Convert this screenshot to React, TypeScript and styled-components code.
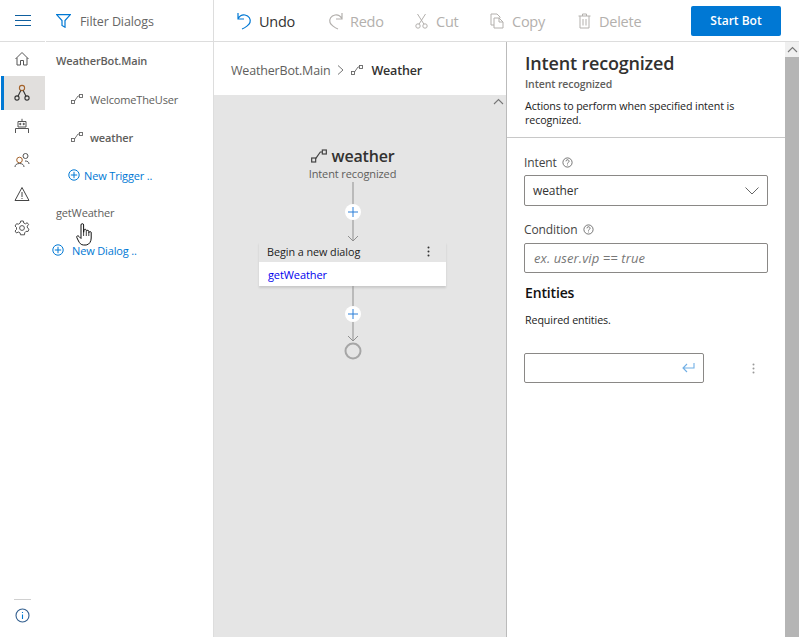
import React from 'react'
import styled, { createGlobalStyle } from 'styled-components'

const GlobalStyle = createGlobalStyle`
  html, body { margin: 0; padding: 0; background: #fff; }
  body { font-family: "Open Sans", "Noto Sans", "Liberation Sans", sans-serif; color: #333; overflow: hidden; }
  * { box-sizing: border-box; }
`

const Page = styled.div`
  width: 799px;
  height: 637px;
  display: flex;
  flex-direction: column;
  position: relative;
`

const Header = styled.header`
  display: flex;
  height: 42px;
  flex: none;
`

const MenuCell = styled.div`
  width: 45px;
  display: flex;
  align-items: center;
  justify-content: center;
  border-bottom: 1px solid #ddd;
  margin-right: 1px;
`

const FilterCell = styled.div`
  width: 168px;
  display: flex;
  align-items: center;
  gap: 9px;
  padding: 1px 0 0 10px;
  font-size: 12.5px;
  letter-spacing: -0.1px;
  color: #666;
  border-bottom: 1px solid #ddd;
  border-right: 1px solid #ddd;
`

const Toolbar = styled.div`
  flex: 1;
  display: flex;
  align-items: center;
  padding: 1px 18px 0 23px;
  border-bottom: 1px solid #ddd;
`

const ToolButton = styled.div<{ $off?: boolean; $w: number; $gap: number }>`
  width: ${p => p.$w}px;
  display: flex;
  align-items: center;
  gap: ${p => p.$gap}px;
  font-size: 14.5px;
  letter-spacing: -0.25px;
  color: ${p => (p.$off ? '#b3b0ad' : '#333')};
`

const StartButton = styled.button`
  margin: -1px 0 0 auto;
  width: 90px;
  height: 30px;
  border: 0;
  border-radius: 2px;
  padding-top: 1px;
  background: #0078d4;
  color: #fff;
  font: 600 12px "Open Sans", sans-serif;
`

const Body = styled.div`
  flex: 1;
  display: flex;
  min-height: 0;
`

const Rail = styled.nav`
  width: 45px;
  flex: none;
  display: flex;
  flex-direction: column;
`

const RailItem = styled.div<{ $active?: boolean }>`
  height: 33.8px;
  margin-left: 1px;
  display: flex;
  align-items: center;
  justify-content: center;
  padding-right: 6px;
  background: ${p => (p.$active ? '#e1dfdd' : 'transparent')};
  border-left: 3px solid ${p => (p.$active ? '#0078d4' : 'transparent')};
`

const RailFoot = styled.div`
  margin-top: auto;
  margin-bottom: 14px;
  display: flex;
  flex-direction: column;
  align-items: center;
  gap: 8px;
  padding-right: 1px;
`

const RailRule = styled.div`
  width: 17px;
  height: 1px;
  background: #d0d0d0;
`

const Sidebar = styled.aside`
  width: 168px;
  flex: none;
  border-right: 1px solid #ddd;
  margin-left: 1px;
  font-size: 11px;
  letter-spacing: -0.15px;
  color: #605e5c;
`

const TreeRow = styled.div<{ $indent: number; $gap?: number; $weight?: number; $link?: boolean; $lift?: boolean }>`
  height: 38px;
  display: flex;
  align-items: center;
  padding-left: ${p => p.$indent}px;
  padding-bottom: ${p => (p.$lift ? 2 : 0)}px;
  gap: ${p => p.$gap ?? 7}px;
  font-weight: ${p => p.$weight ?? 400};
  color: ${p => (p.$link ? '#0078d4' : '#605e5c')};
`

const Center = styled.main`
  width: 292px;
  flex: none;
  display: flex;
  flex-direction: column;
`

const Crumbs = styled.div`
  height: 53px;
  display: flex;
  align-items: center;
  padding: 3px 0 0 17px;
  font-size: 12.5px;
  letter-spacing: -0.18px;
  color: #605e5c;
`

const CrumbCurrent = styled.strong`
  font-weight: 600;
  color: #323130;
  margin-left: 8px;
`

const Canvas = styled.div`
  flex: 1;
  background: #e5e5e5;
  position: relative;
  padding: 51px 15px 0 0;
  display: flex;
  flex-direction: column;
  align-items: center;
`

const ScrollUp = styled.div`
  position: absolute;
  top: 3px;
  right: 2px;
  line-height: 0;
`

const FlowTitle = styled.div`
  height: 20px;
  display: flex;
  align-items: center;
  gap: 5px;
  font-size: 16px;
  font-weight: 600;
  letter-spacing: -0.2px;
  color: #323130;
`

const FlowSub = styled.div`
  font-size: 11px;
  line-height: 16px;
  letter-spacing: -0.12px;
  color: #605e5c;
`

const Connector = styled.div<{ $h: number }>`
  height: ${p => p.$h}px;
  flex: none;
  line-height: 0;
`

const Node = styled.div`
  width: 187px;
  flex: none;
  background: #fff;
  box-shadow: 0 2px 2px rgba(0, 0, 0, 0.12);
`

const NodeHead = styled.div`
  height: 20px;
  background: #e5e5e5;
  display: flex;
  align-items: center;
  justify-content: space-between;
  padding: 0 16px 1px 8px;
  font-size: 10.8px;
  letter-spacing: -0.05px;
  color: #222;
`

const NodeBody = styled.div`
  height: 24px;
  display: flex;
  align-items: center;
  padding: 1px 0 0 9px;
  font-size: 11px;
  letter-spacing: -0.1px;
  color: #0000ee;
`

const Panel = styled.section`
  flex: 1;
  display: flex;
  border-left: 1px solid #bbb;
`

const PanelMain = styled.div`
  flex: 1;
  display: flex;
  flex-direction: column;
`

const PanelHead = styled.div`
  height: 96px;
  padding: 8px 10px 0 18px;
  border-bottom: 1px solid #c8c8c8;
`

const PanelTitle = styled.h1`
  margin: 0;
  font-size: 18px;
  line-height: 26px;
  font-weight: 600;
  letter-spacing: -0.18px;
  color: #323130;
`

const PanelSub = styled.div`
  font-size: 10.5px;
  line-height: 14px;
  margin-top: 1px;
  font-weight: 600;
  color: #605e5c;
  letter-spacing: -0.1px;
  margin-bottom: 8px;
`

const PanelDesc = styled.div`
  font-size: 10.7px;
  line-height: 14px;
  letter-spacing: -0.1px;
  color: #222;
`

const PanelForm = styled.div`
  padding: 14px 17px 0 17px;
  display: flex;
  flex-direction: column;
`

const FieldLabel = styled.label<{ $mb: number }>`
  height: 20px;
  display: flex;
  align-items: center;
  gap: 5px;
  font-size: 12px;
  letter-spacing: -0.1px;
  color: #444;
  margin-bottom: ${p => p.$mb}px;
`

const Field = styled.div<{ $w?: number; $h?: number; $mb: number }>`
  width: ${p => (p.$w ? `${p.$w}px` : '100%')};
  height: ${p => p.$h ?? 30}px;
  flex: none;
  border: 1px solid #8a8886;
  border-radius: 2px;
  display: flex;
  align-items: center;
  justify-content: space-between;
  padding: 0 8px;
  font-size: 12px;
  letter-spacing: -0.1px;
  color: #333;
  margin-bottom: ${p => p.$mb}px;
`

const Placeholder = styled.span`
  font-size: 13px;
  font-style: italic;
  letter-spacing: 0.1px;
  color: #777;
  padding-left: 1px;
`

const SectionTitle = styled.div`
  font-size: 14px;
  line-height: 20px;
  font-weight: 600;
  letter-spacing: -0.15px;
  color: #111;
  padding-left: 1px;
`

const Hint = styled.div`
  font-size: 10.7px;
  line-height: 14px;
  letter-spacing: -0.1px;
  color: #222;
  margin: 10px 0 26px;
  padding-left: 1px;
`

const EntityRow = styled.div`
  display: flex;
  align-items: flex-start;
  justify-content: space-between;
  padding-right: 13px;
`

const Kebab = styled.div`
  height: 30px;
  display: flex;
  align-items: center;
`

const ScrollTrack = styled.div`
  width: 14px;
  flex: none;
  display: flex;
  flex-direction: column;
  background: #b5b5b5;
`

const ScrollCap = styled.div`
  height: 15px;
  background: #f0f0f0;
  display: flex;
  align-items: center;
  justify-content: center;
`

const EndCircle = styled.svg`
  display: block;
  flex: none;
`

const Cursor = styled.svg`
  position: absolute;
  left: 76px;
  top: 223px;
`

const Icon = styled.svg`
  display: block;
  flex: none;
  fill: none;
`

const CrumbArrow = styled(Icon)`
  margin: 0 7px;
`

type SvgProps = { size?: number; color?: string }

const Trigger = ({ size = 12, color = '#666' }: SvgProps) => (
  <Icon width={size} height={size} viewBox="0 0 12 12" stroke={color} strokeWidth="0.9">
    <rect x="0.5" y="7.5" width="3" height="3" />
    <rect x="8.5" y="1.5" width="3" height="3" />
    <path d="M3.5 8 L7 3 H8.5" />
  </Icon>
)

const PlusCircle = () => (
  <Icon width="12" height="12" viewBox="0 0 12 12" stroke="#0078d4">
    <circle cx="6" cy="6" r="5.2" />
    <path d="M6 2.8V9.2M2.8 6H9.2" />
  </Icon>
)

const HelpMark = () => (
  <Icon width="11" height="11" viewBox="0 0 11 11" stroke="#555" strokeWidth="0.8">
    <circle cx="5.5" cy="5.5" r="4.6" />
    <path d="M4 4.3a1.5 1.5 0 1 1 2.3 1.2c-.5.3-.8.6-.8 1.1M5.5 7.6v.8" />
  </Icon>
)

const DotsV = ({ color = '#333' }: { color?: string }) => (
  <svg width="3" height="11" viewBox="0 0 3 11" fill={color}>
    <circle cx="1.5" cy="1.5" r="1" />
    <circle cx="1.5" cy="5.5" r="1" />
    <circle cx="1.5" cy="9.5" r="1" />
  </svg>
)

const Chevron = () => (
  <Icon width="11" height="7" viewBox="0 0 11 7" stroke="#777" strokeWidth="1.1">
    <path d="M1 6 L5.5 1.5 L10 6" />
  </Icon>
)

const AddLink = ({ height, plusY }: { height: number; plusY: number }) => (
  <svg width="20" height={height} viewBox={`0 0 20 ${height}`} fill="none">
    <path d={`M10 0V${height - 1}`} stroke="#8f8f8f" />
    <path d={`M5 ${height - 6} L10 ${height - 1} L15 ${height - 6}`} stroke="#8f8f8f" />
    <circle cx="10" cy={plusY} r="8" fill="#fff" />
    <path d={`M10 ${plusY - 5}V${plusY + 5}M5 ${plusY}H15`} stroke="#2b7fd8" />
  </svg>
)

const railIcons = [
  <Icon key="home" width="16" height="16" viewBox="0 0 16 16" stroke="#555" strokeWidth="1">
    <path d="M1.5 8 L8 1.5 L14.5 8 M3 6.8V14H6.5V9.5H9.500V14H13V6.8" />
  </Icon>,
  <Icon key="dialogs" width="16" height="18" viewBox="0 0 16 18" stroke="#333" strokeWidth="1.1">
    <circle cx="8" cy="4" r="2.6" stroke="#a4622a" />
    <circle cx="3" cy="14" r="2.1" />
    <circle cx="13" cy="14" r="2.1" />
    <path d="M6.8 6.4 L4 12.2 M9.2 6.4 L12 12.2" />
  </Icon>,
  <Icon key="bot" width="16" height="16" viewBox="0 0 16 16" stroke="#555" strokeWidth="1">
    <path d="M8 .8V3M4 3.5H12V9H4ZM1.5 15V10.5H14.5V15" />
    <circle cx="6.3" cy="6" r=".7" fill="#555" />
    <circle cx="9.7" cy="6" r=".7" fill="#555" />
  </Icon>,
  <Icon key="users" width="16" height="16" viewBox="0 0 16 16" stroke="#555" strokeWidth="1">
    <circle cx="5.5" cy="8" r="2.8" stroke="#a4622a" />
    <circle cx="11.5" cy="4" r="2.5" />
    <path d="M1 15c0-2 1.5-3.5 4.5-3.5S10 13 10 15M11 9c2.500 0 4 1 4 3" />
  </Icon>,
  <Icon key="warn" width="16" height="16" viewBox="0 0 16 16" stroke="#444" strokeWidth="1">
    <path d="M8 1.500 L15 14.500 H1 Z M8 6V11M8 12V13" />
  </Icon>,
  <Icon key="gear" width="16" height="16" viewBox="0 0 16 16" stroke="#555" strokeWidth="1">
    <circle cx="8" cy="8" r="2.4" />
    <path d="M6.700 1H9.300L9.700 3L11.500 3.800L13.200 2.700L14.600 4.700L13.200 6.100L13.500 8L15 9.200L14 11.500L12 11.300L10.700 12.800L10.500 14.800H6.500L6.100 12.900L4.300 12L2.500 13L1 11L2.500 9.500V7.500L1 6L2.600 3.700L4.400 4.200L6.200 3Z" />
  </Icon>,
]

const toolIcons = {
  undo: (
    <Icon width="15" height="18" viewBox="0 0 15 18" stroke="#0078d4" strokeWidth="1.2">
      <path d="M1 1V7H7M1 6.500C3 3.500 5.500 2.500 8 3C12 3.800 14 7 13 10.500C12.500 12.500 8 16 5 17" />
    </Icon>
  ),
  redo: (
    <Icon width="15" height="18" viewBox="0 0 15 18" stroke="#b3b0ad" strokeWidth="1.2">
      <path d="M14 1V7H8M14 6.500C12 3.500 9.500 2.500 7 3C3 3.800 1 7 2 10.500C2.500 12.500 7 16 10 17" />
    </Icon>
  ),
  cut: (
    <Icon width="13" height="16" viewBox="0 0 13 16" stroke="#b3b0ad" strokeWidth="1">
      <circle cx="3" cy="13" r="2.200" />
      <circle cx="10" cy="13" r="2.200" />
      <path d="M2.500 1 L9 11.200 M10.500 1 L4 11.200" />
    </Icon>
  ),
  copy: (
    <Icon width="14" height="16" viewBox="0 0 14 16" stroke="#b3b0ad" strokeWidth="1">
      <path d="M4 12H1V1H7L10 4V5M4 5H9L13 9V15H4ZM9 5V9H13" />
    </Icon>
  ),
  del: (
    <Icon width="13" height="16" viewBox="0 0 13 16" stroke="#b3b0ad" strokeWidth="1">
      <path d="M.5 3H12.500M4.500 3V1H8.500V3M2 3V15H11V3M5 6V12.500M8 6V12.500" />
    </Icon>
  ),
}

export default function App() {
  return (
    <Page>
      <GlobalStyle />
      <Header>
        <MenuCell>
          <Icon width="16" height="11" viewBox="0 0 16 11" stroke="#0f5f9e">
            <path d="M0 .5H16M0 5.500H16M0 10.500H16" />
          </Icon>
        </MenuCell>
        <FilterCell>
          <Icon width="15" height="14" viewBox="0 0 15 14" stroke="#0078d4" strokeWidth="1.2">
            <path d="M.6 .6H14.400L9 6.500V13.200L6 11.500V6.500Z" />
          </Icon>
          Filter Dialogs
        </FilterCell>
        <Toolbar>
          <ToolButton $w={91} $gap={7}>{toolIcons.undo}Undo</ToolButton>
          <ToolButton $w={87} $gap={7} $off>{toolIcons.redo}Redo</ToolButton>
          <ToolButton $w={75} $gap={8} $off>{toolIcons.cut}Cut</ToolButton>
          <ToolButton $w={88} $gap={8} $off>{toolIcons.copy}Copy</ToolButton>
          <ToolButton $w={80} $gap={8} $off>{toolIcons.del}Delete</ToolButton>
          <StartButton>Start Bot</StartButton>
        </Toolbar>
      </Header>
      <Body>
        <Rail>
          {railIcons.map((icon, i) => (
            <RailItem key={i} $active={i === 1}>{icon}</RailItem>
          ))}
          <RailFoot>
            <RailRule />
            <Icon width="15" height="15" viewBox="0 0 15 15" stroke="#335f8f" strokeWidth="1.1">
              <circle cx="7.500" cy="7.500" r="6.500" />
              <path d="M7.500 6.500V11M7.500 4V5" stroke="#0078d4" />
            </Icon>
          </RailFoot>
        </Rail>
        <Sidebar>
          <TreeRow $indent={10} $weight={600} $lift>WeatherBot.Main</TreeRow>
          <TreeRow $indent={25}><Trigger />WelcomeTheUser</TreeRow>
          <TreeRow $indent={25} $weight={600}><Trigger />weather</TreeRow>
          <TreeRow $indent={22} $gap={4} $link><PlusCircle />New Trigger ..</TreeRow>
          <TreeRow $indent={10} $lift>getWeather</TreeRow>
          <TreeRow $indent={6} $gap={8} $link $lift><PlusCircle />New Dialog ..</TreeRow>
        </Sidebar>
        <Center>
          <Crumbs>
            WeatherBot.Main
            <CrumbArrow width="7" height="10" viewBox="0 0 7 10" stroke="#777">
              <path d="M1 .5 L6 5 L1 9.500" />
            </CrumbArrow>
            <Trigger />
            <CrumbCurrent>Weather</CrumbCurrent>
          </Crumbs>
          <Canvas>
            <ScrollUp><Chevron /></ScrollUp>
            <FlowTitle><Trigger size={16} color="#444" />weather</FlowTitle>
            <FlowSub>Intent recognized</FlowSub>
            <Connector $h={60}><AddLink height={60} plusY={30} /></Connector>
            <Node>
              <NodeHead>Begin a new dialog<DotsV /></NodeHead>
              <NodeBody>getWeather</NodeBody>
            </Node>
            <Connector $h={56}><AddLink height={56} plusY={28} /></Connector>
            <EndCircle width="18" height="18" viewBox="0 0 18 18" fill="none">
              <circle cx="9" cy="9" r="7.500" stroke="#a6a6a6" strokeWidth="2" />
            </EndCircle>
          </Canvas>
        </Center>
        <Panel>
          <PanelMain>
            <PanelHead>
              <PanelTitle>Intent recognized</PanelTitle>
              <PanelSub>Intent recognized</PanelSub>
              <PanelDesc>Actions to perform when specified intent is recognized.</PanelDesc>
            </PanelHead>
            <PanelForm>
              <FieldLabel $mb={3}>Intent <HelpMark /></FieldLabel>
              <Field $h={31} $mb={13}>
                weather
                <Icon width="14" height="8" viewBox="0 0 14 8" stroke="#666">
                  <path d="M.5 .5 L7 7 L13.500 .5" />
                </Icon>
              </Field>
              <FieldLabel $mb={4}>Condition <HelpMark /></FieldLabel>
              <Field $mb={10}><Placeholder>ex. user.vip == true</Placeholder></Field>
              <SectionTitle>Entities</SectionTitle>
              <Hint>Required entities.</Hint>
              <EntityRow>
                <Field $w={180} $mb={0}>
                  <span />
                  <Icon width="13" height="10" viewBox="0 0 13 10" stroke="#71afe5" strokeWidth="1.1">
                    <path d="M12 0V5H1M5 1 L1 5 L5 9" />
                  </Icon>
                </Field>
                <Kebab><DotsV color="#999" /></Kebab>
              </EntityRow>
            </PanelForm>
          </PanelMain>
          <ScrollTrack>
            <ScrollCap><Chevron /></ScrollCap>
          </ScrollTrack>
        </Panel>
      </Body>
      <Cursor width="17" height="23" viewBox="0 0 17 23">
        <path
          d="M5 2a1.300 1.300 0 0 1 2.600 0V9.500L8 7a1.200 1.200 0 0 1 2.300 .5L10.500 8a1.200 1.200 0 0 1 2.300 .5L13 9.500a1.100 1.100 0 0 1 2.200 .5V15c0 3-1.500 6.500-5 7H7.500C5 22 3.500 20 2.500 18L.8 14.500C.3 13 2 12 3 13.500L5 15.500Z"
          fill="#fff"
          stroke="#111"
          strokeWidth="1"
        />
        <path d="M7.600 9.500V13M10.300 8V13M12.800 9V13" stroke="#111" strokeWidth="0.8" />
      </Cursor>
    </Page>
  )
}
